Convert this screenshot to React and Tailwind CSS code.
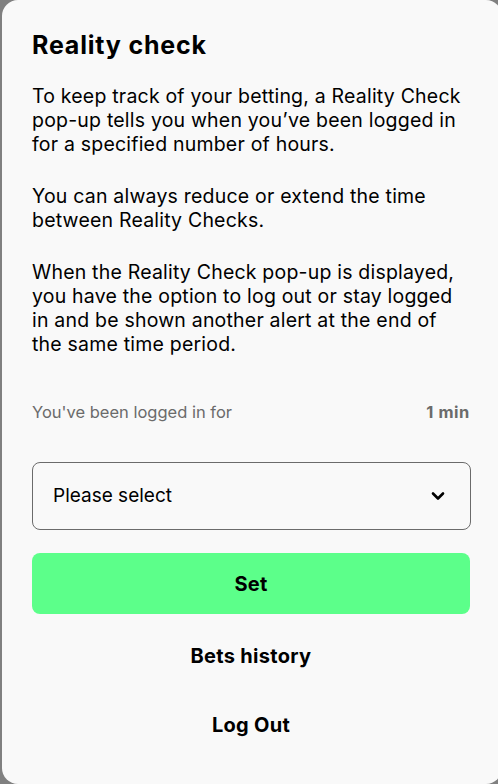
import React from 'react'

const font = { fontFamily: 'Inter, "Noto Sans", sans-serif' }

const App = () => {
  return (
    <div className="w-[498px] h-[784px] bg-[#808080] pl-[2px] overflow-hidden" style={font}>
      <div className="h-[784px] w-[500px] bg-[#f9f9f9] rounded-[16px] px-[30px] pt-[29px] text-black">
        <h1 className="text-[25px] leading-[32px] font-bold tracking-[0.8px]">Reality check</h1>
        <div className="mt-[23px] w-[440px] text-[19.5px] leading-[24px] tracking-[0.2px] flex flex-col gap-[28px]">
          <p>To keep track of your betting, a Reality Check pop-up tells you when you’ve been logged in for a specified number of hours.</p>
          <p>You can always reduce or extend the time between Reality Checks.</p>
          <p>When the Reality Check pop-up is displayed, you have the option to log out or stay logged in and be shown another alert at the end of the same time period.</p>
        </div>
        <div className="mt-[46px] w-[438px] flex justify-between items-center text-[16.5px] leading-[20px] text-[#6b6b6b]">
          <span>You've been logged in for</span>
          <span className="font-bold tracking-[0.6px]">1 min</span>
        </div>
        <div className="mt-[40px] w-[439px] h-[68px] border border-[#6b6b6b] rounded-[8px] flex items-center justify-between pl-[20px] pr-[24px]">
          <span className="text-[19px]">Please select</span>
          <svg width="16" height="16" viewBox="0 0 16 16" fill="none">
            <path d="M3 5.5 L8 10.5 L13 5.5" stroke="#000" strokeWidth="2.6" strokeLinecap="round" strokeLinejoin="round" />
          </svg>
        </div>
        <button className="mt-[23px] w-[438px] h-[61px] bg-[#5cff8a] rounded-[8px] text-[20px] font-bold tracking-[0.2px] flex items-center justify-center">Set</button>
        <button className="mt-[18px] w-[438px] h-[48px] text-[20px] font-bold tracking-[0.3px] flex items-center justify-center">Bets history</button>
        <button className="mt-[21px] w-[438px] h-[48px] text-[20px] font-bold tracking-[0.3px] flex items-center justify-center">Log Out</button>
      </div>
    </div>
  )
}

export default App
